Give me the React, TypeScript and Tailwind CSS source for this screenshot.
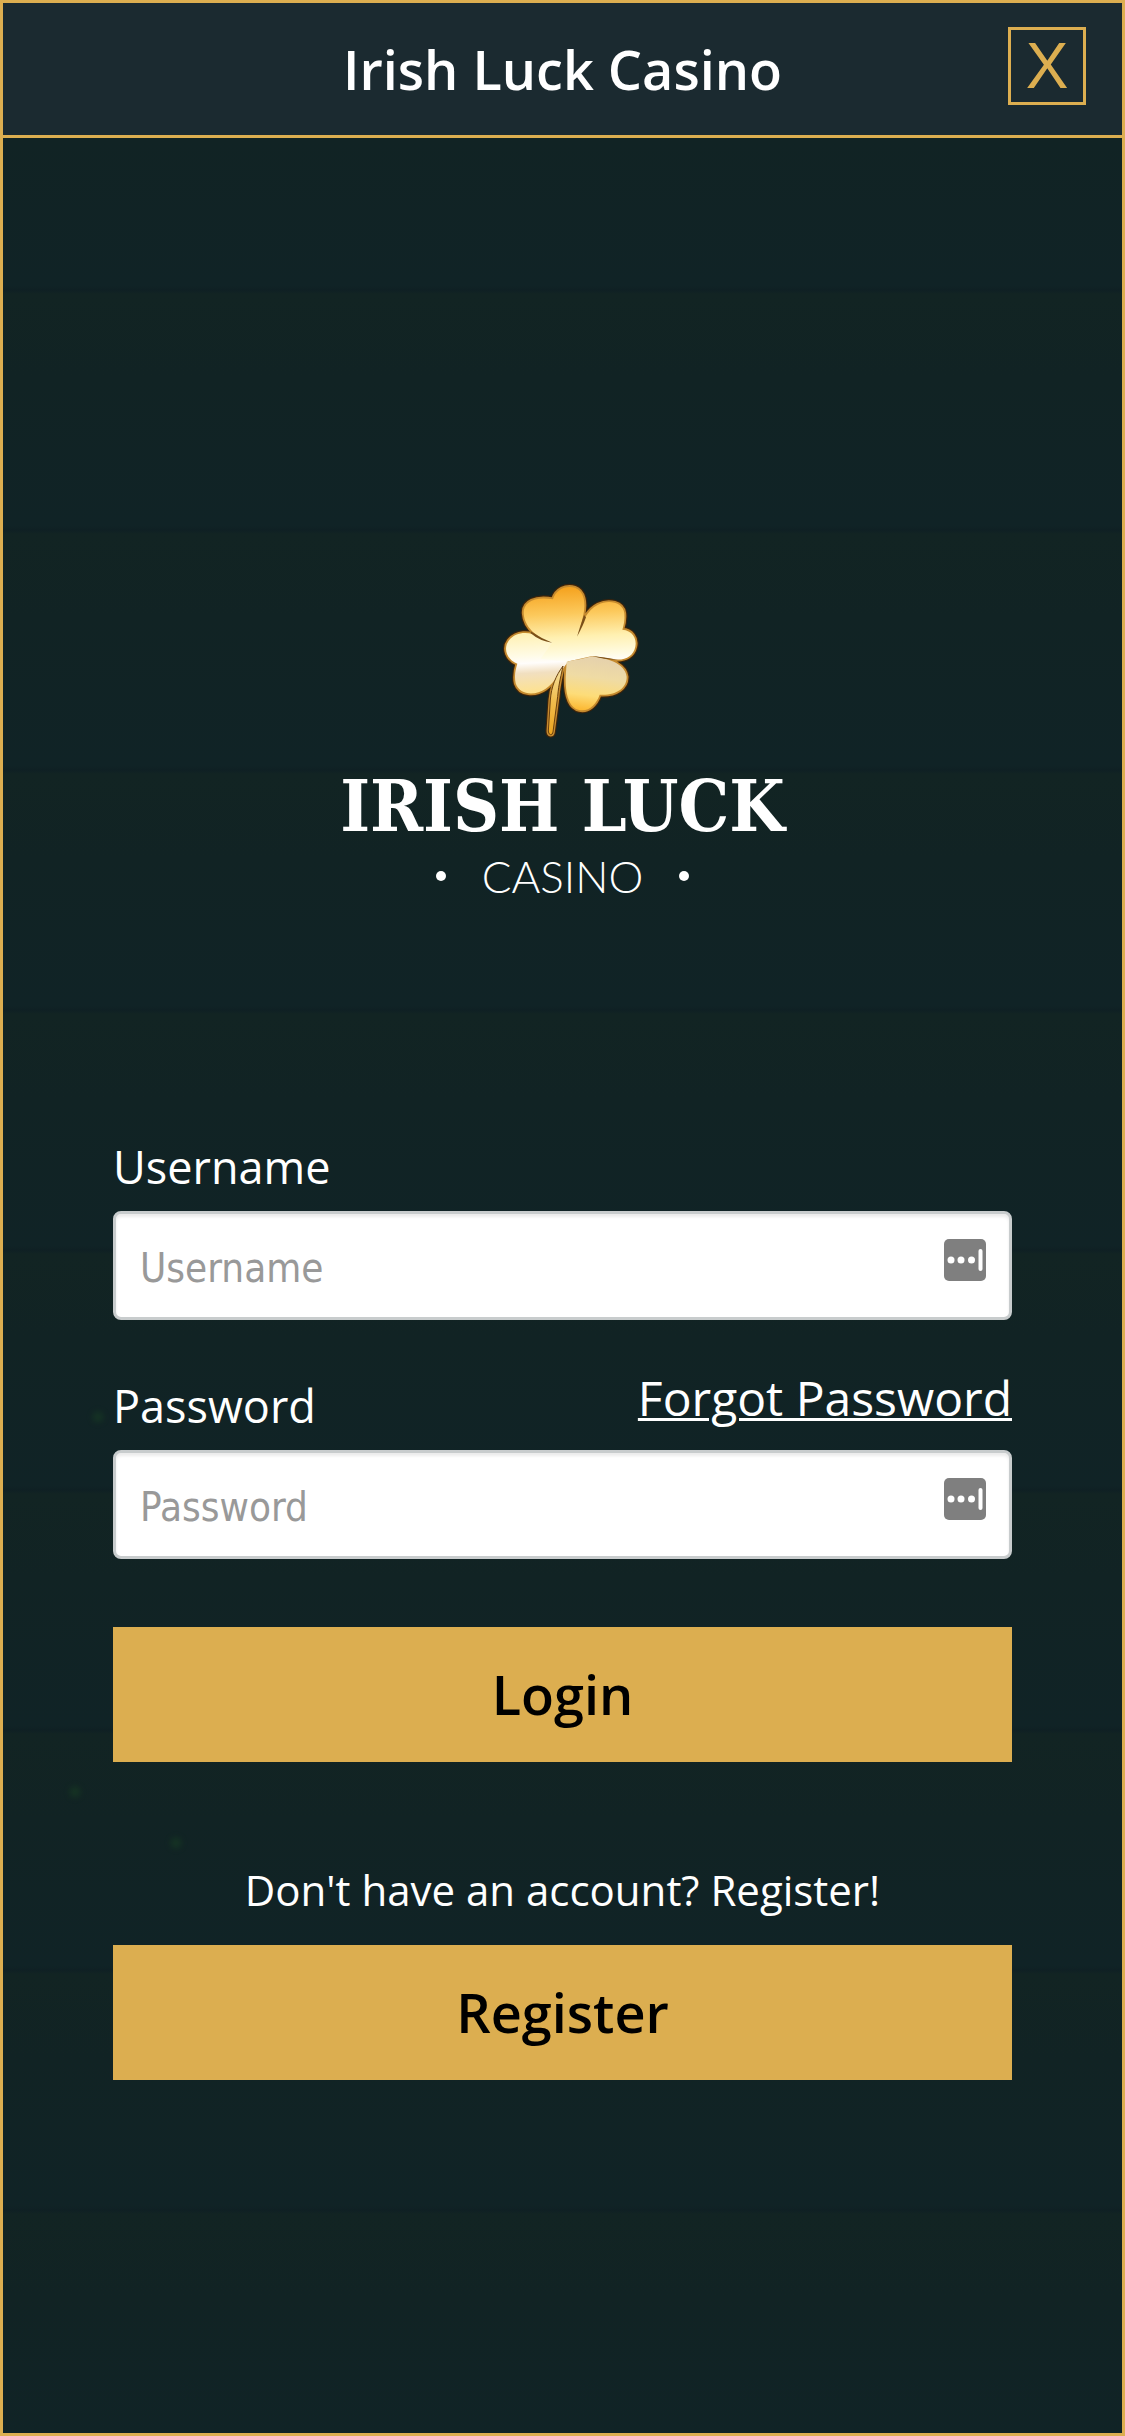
import { useId } from "react"

const sparks = [
  { left: "8%", top: "58%" },
  { left: "6%", top: "73.4%" },
  { left: "15%", top: "75.5%" },
]

const leaves =
  "M215 247C180 237 132 210 129 160C127 125 165 108 217 118C226 88 255 75 283 83C311 93 316 130 308 165C303 192 295 212 290 228C300 190 320 150 352 134C385 118 427 127 431 160C433 180 429 197 425 209C453 210 470 235 464 260C458 288 435 302 400 298L335 288C375 294 433 308 438 350C439 383 408 407 357 404C347 433 324 456 296 450C264 443 254 400 255 350C255 330 256 320 260 310C238 335 222 368 195 386C165 407 117 407 105 370C100 347 105 327 110 311C78 299 67 265 84 242C107 213 145 214 180 231Z"
const stem =
  "M247 318C225 348 212 380 209 420L203 513Q203 523 210 524Q216 524 217 516L231 410C234 370 243 340 247 318Z"

const rims = [
  { color: "#3d240b", width: 18 },
  { color: "#c58a2e", width: 11 },
]

function Clover() {
  return (
    <svg viewBox="-23 0 540 600" className="h-[200px] w-[180px]" role="img" aria-label="Four-leaf clover">
      <defs>
        <linearGradient id="upper" gradientUnits="userSpaceOnUse" x1="250" y1="80" x2="262" y2="312">
          <stop offset="0" stopColor="#f5a11c" />
          <stop offset="0.35" stopColor="#fcc95c" />
          <stop offset="0.65" stopColor="#fff0b0" />
          <stop offset="0.88" stopColor="#fffbe0" />
          <stop offset="1" stopColor="#ffffff" />
        </linearGradient>
        <linearGradient id="lowerLeft" gradientUnits="userSpaceOnUse" x1="160" y1="215" x2="170" y2="402">
          <stop offset="0" stopColor="#fff0b0" />
          <stop offset="0.38" stopColor="#fffbe6" />
          <stop offset="0.5" stopColor="#fffdfb" />
          <stop offset="0.66" stopColor="#f1dfc0" />
          <stop offset="1" stopColor="#ffe28a" />
        </linearGradient>
        <linearGradient id="lowerRight" gradientUnits="userSpaceOnUse" x1="340" y1="295" x2="320" y2="455">
          <stop offset="0" stopColor="#e6d2ac" />
          <stop offset="0.35" stopColor="#efdba4" />
          <stop offset="0.7" stopColor="#fddc78" />
          <stop offset="1" stopColor="#fcb62e" />
        </linearGradient>
        <linearGradient id="stem" x1="0" y1="0" x2="0" y2="1">
          <stop offset="0" stopColor="#f6e3a6" />
          <stop offset="0.5" stopColor="#f0bd4e" />
          <stop offset="1" stopColor="#eda51f" />
        </linearGradient>
      </defs>
      {/* dark rim, then gold rim, then the leaves */}
      {rims.map((rim) => (
        <g key={rim.color} fill={rim.color} stroke={rim.color} strokeWidth={rim.width} strokeLinejoin="round">
          <path d={leaves} />
          <path d={stem} />
        </g>
      ))}
      <path
        fill="url(#lowerLeft)"
        d="M110 311C78 299 67 265 84 242C107 213 145 214 180 231L270 262L260 308C238 335 222 368 195 386C165 407 117 407 105 370C100 347 105 327 110 311Z"
      />
      <path
        fill="url(#upper)"
        d="M215 247C180 237 132 210 129 160C127 125 165 108 217 118C226 88 255 75 283 83C311 93 316 130 308 165C303 192 295 212 290 228C300 190 320 150 352 134C385 118 427 127 431 160C433 180 429 197 425 209C453 210 470 235 464 260C458 288 435 302 400 298L335 288L258 305L180 296Z"
      />
      <path
        fill="url(#lowerRight)"
        d="M258 305C285 300 310 296 335 289C375 294 433 308 438 350C439 383 408 407 357 404C347 433 324 456 296 450C264 443 254 400 255 350Z"
      />
      <path fill="url(#stem)" stroke="#6b410f" strokeWidth="3" d={stem} />
      {/* creases between the leaves, tapering toward the centre */}
      <g fill="#7a4f18">
        <path d="M150 214Q182 236 215 248Q178 244 150 220Z" />
        <path d="M310 165Q298 200 289 230Q307 198 316 172Z" />
        <path d="M334 288Q370 292 412 299Q370 299 334 288Z" />
      </g>
    </svg>
  )
}

function Logo() {
  return (
    <div className="flex flex-col items-center text-white">
      <Clover />
      <p className="mt-2 font-['DejaVu_Serif_Condensed','DejaVu_Serif',serif] text-[71px] leading-[76px] font-bold whitespace-nowrap">
        IRISH LUCK
      </p>
      <div className="mt-2.5 flex items-center gap-9">
        <span className="size-2.5 rounded-full bg-white" />
        <p className="font-[Lato,sans-serif] text-[44px] leading-none font-light">CASINO</p>
        <span className="size-2.5 rounded-full bg-white" />
      </div>
    </div>
  )
}

function PasswordManagerIcon() {
  return (
    <svg viewBox="0 0 42 42" className="size-[42px]" aria-hidden="true">
      <rect width="42" height="42" rx="5" fill="#7f7f7f" />
      <circle cx="7" cy="21" r="3.5" fill="#fff" />
      <circle cx="17" cy="21" r="3.5" fill="#fff" />
      <circle cx="27.5" cy="21" r="3.5" fill="#fff" />
      <rect x="34.5" y="10" width="4" height="22" rx="2" fill="#fff" />
    </svg>
  )
}

type FieldProps = {
  label: string
  type: string
  link?: string
}

function Field({ label, type, link }: FieldProps) {
  const id = useId()

  return (
    <div>
      <div className="flex items-start justify-between">
        <label htmlFor={id} className="self-end text-[45px] leading-[60px]">
          {label}
        </label>
        {link && (
          <a href="#forgot" className="mb-2 text-5xl leading-[60px] underline decoration-[3px]">
            {link}
          </a>
        )}
      </div>
      <div className="relative mt-3.5">
        <input
          id={id}
          type={type}
          placeholder={label}
          className="block h-[109px] w-full rounded-lg border-[3px] border-[#c8cccd] bg-white pt-1 pr-24 pl-6 font-['DejaVu_Sans_Condensed','DejaVu_Sans',sans-serif] text-[40px] text-black shadow-[inset_0_3px_3px_rgba(0,0,0,0.08)] placeholder:text-[#999]"
        />
        <button type="button" aria-label={`Fill ${label}`} className="absolute top-7 right-[26px]">
          <PasswordManagerIcon />
        </button>
      </div>
    </div>
  )
}

function GoldButton({ children, type }: { children: string; type: "button" | "submit" }) {
  return (
    <button type={type} className="h-[135px] w-full bg-[#dcae50] text-[54px] font-semibold text-black">
      {children}
    </button>
  )
}

export default function App() {
  return (
    <div className="relative flex min-h-screen flex-col border-[3px] border-[#dcae50] bg-[#112324] font-['Open_Sans',sans-serif] text-white">
      <header className="grid h-[135px] grid-cols-[1fr_auto_1fr] items-center border-b-[3px] border-[#dcae50] bg-[#1b2a30] px-9">
        <h1 className="col-start-2 text-[54px] font-semibold">Irish Luck Casino</h1>
        <button
          type="button"
          aria-label="Close"
          className="mt-6 flex size-[78px] items-center justify-center self-start justify-self-end border-[3px] border-[#dcae50] font-['Liberation_Sans',sans-serif] text-[64px] leading-none text-[#dcae50]"
        >
          X
        </button>
      </header>

      <main className="flex-1 bg-[repeating-linear-gradient(180deg,#112324_0px,#102326_148px,#0f2024_152px,#122423_156px,#112324_240px)] px-[110px] pt-[422px] pb-24">
        {sparks.map((spark) => (
          <span
            key={spark.top}
            className="absolute size-2.5 rounded-full bg-[#1b4a22] opacity-50 blur-[3px]"
            style={spark}
          />
        ))}
        <Logo />

        <form className="mt-[239px]" onSubmit={(e) => e.preventDefault()}>
          <div className="flex flex-col gap-12">
            <Field label="Username" type="text" />
            <Field label="Password" type="password" link="Forgot Password" />
          </div>
          <div className="mt-[68px]">
            <GoldButton type="submit">Login</GoldButton>
          </div>
        </form>

        <section className="mt-[98px] text-center">
          <p className="mb-[25px] text-[42px] leading-[60px]">Don't have an account? Register!</p>
          <GoldButton type="button">Register</GoldButton>
        </section>
      </main>
    </div>
  )
}
